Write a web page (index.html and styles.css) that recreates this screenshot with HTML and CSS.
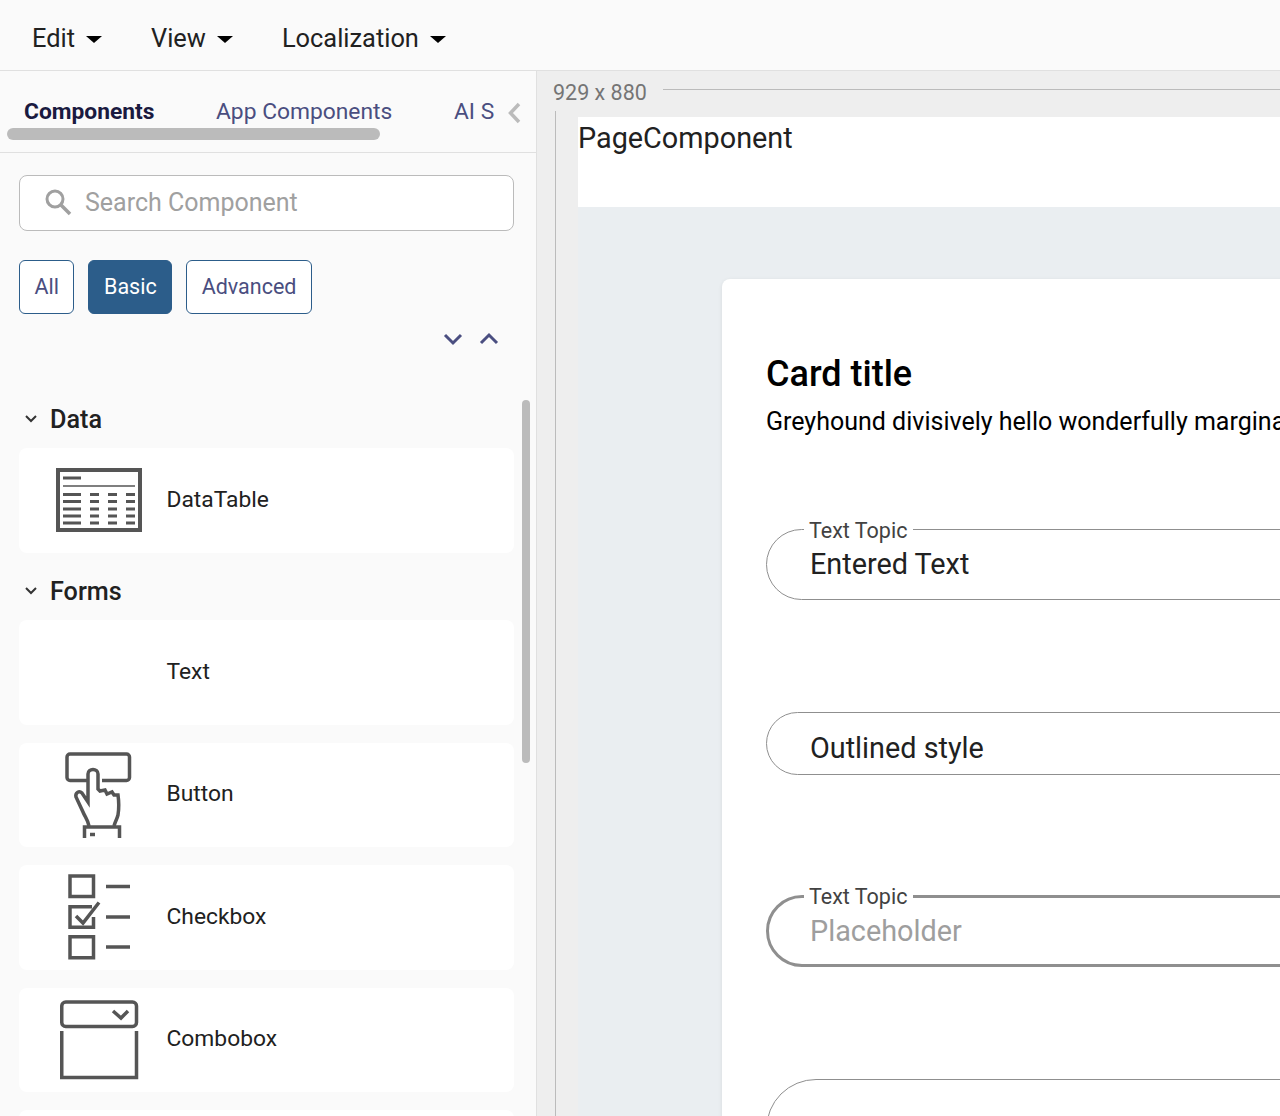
FILE: index.html
```html
<!DOCTYPE html>
<html lang="en"><head>
    <meta charset="UTF-8">
    <title>Page Editor</title>
    <link rel="stylesheet" href="styles.css">
</head>
<body>

    <header class="menubar">
        <div class="menu">Edit <span class="caret"></span></div>
        <div class="menu">View <span class="caret"></span></div>
        <div class="menu">Localization <span class="caret"></span></div>
    </header>

    <div class="main">
        <aside class="sidebar">
            <div class="tabs">
                <span class="tab tab-active">Components</span>
                <span class="tab tab-app">App Components</span>
                <span class="tab tab-ai">AI S</span>
                <svg class="tab-back" width="16" height="22" viewBox="0 0 16 22"><path d="M12 2 3.500 11 12 20" fill="none" stroke="#bbb" stroke-width="3.500"/></svg>
                <div class="tabs-scroll"></div>
            </div>

            <div class="search">
                <svg width="28" height="28" viewBox="0 0 28 28"><circle cx="11" cy="11" r="8" fill="none" stroke="#a0a0a0" stroke-width="3"/><path d="M17 17 26 26" stroke="#a0a0a0" stroke-width="3.500"/></svg>
                <span>Search Component</span>
            </div>

            <div class="filters">
                <button class="filter">All</button>
                <button class="filter filter-on">Basic</button>
                <button class="filter">Advanced</button>
            </div>

            <div class="collapse-row">
                <svg width="20" height="14" viewBox="0 0 20 14"><path d="M2 3 10 11 18 3" fill="none" stroke="#4a4e80" stroke-width="3"/></svg>
                <svg width="20" height="14" viewBox="0 0 20 14"><path d="M2 11 10 3 18 11" fill="none" stroke="#4a4e80" stroke-width="3"/></svg>
            </div>

            <div class="section-head">
                <svg width="14" height="10" viewBox="0 0 14 10"><path d="M2 2 7 7 12 2" fill="none" stroke="#333" stroke-width="2"/></svg>
                Data
            </div>
            <div class="item">
                <svg class="item-icon" width="120" height="104" viewBox="0 0 120 104">
                    <rect x="18" y="22" width="82" height="60" fill="none" stroke="#555" stroke-width="4"/>
                    <path d="M23 30H41" stroke="#555" stroke-width="3"/>
                    <path d="M23 38H95" stroke="#555" stroke-width="1.500"/>
                    <path d="M23 46.500H41M50 46.500H59M68 46.500H77M86 46.500H95M23 53.500H41M50 53.500H59M68 53.500H77M86 53.500H95M23 61H41M50 61H59M68 61H77M86 61H95M23 68H41M50 68H59M68 68H77M86 68H95M23 75H41M50 75H59M68 75H77M86 75H95" stroke="#555" stroke-width="3"/>
                </svg>
                <span>DataTable</span>
            </div>

            <div class="section-head section-forms">
                <svg width="14" height="10" viewBox="0 0 14 10"><path d="M2 2 7 7 12 2" fill="none" stroke="#333" stroke-width="2"/></svg>
                Forms
            </div>
            <div class="item">
                <div class="item-icon"></div>
                <span>Text</span>
            </div>
            <div class="item">
                <svg class="item-icon" width="120" height="104" viewBox="0 2 120 104" fill="none" stroke="#555" stroke-width="3.500">
                    <path d="M47 39.500H30a3 3 0 0 1-3-3V16a3 3 0 0 1 3-3H86.500a3 3 0 0 1 3 3V36.500a3 3 0 0 1-3 3H62"/>
                    <path d="M49 85C48 79 45 76 43 71L36 56C35 52 39 49 42 52L48 61V33C48 27 58 27 58 33V48L60 50 65 49 67 53 72 51 74 54 78 54C79 61 79 68 78 74 77 78 75 81 74 85"/>
                    <path d="M44.500 97V86H79.500V97"/>
                    <path d="M50 93.500H55"/>
                </svg>
                <span>Button</span>
            </div>
            <div class="item">
                <svg class="item-icon" width="120" height="104" viewBox="0 0 120 104" fill="none" stroke="#555" stroke-width="3.500">
                    <rect x="30" y="11" width="23.500" height="20.500"/>
                    <path d="M52 41.750H30V62.250H53.500V52"/>
                    <rect x="30" y="71.750" width="23.500" height="21"/>
                    <path d="M66 21.500H90M66 52H90M66 82H90"/>
                    <path d="M36 51 43 58 59 37.500"/>
                </svg>
                <span>Checkbox</span>
            </div>
            <div class="item">
                <svg class="item-icon" width="120" height="104" viewBox="0 -3 120 104" fill="none" stroke="#555" stroke-width="3.500">
                    <rect x="21.750" y="11" width="74.750" height="24.500" rx="4"/>
                    <path d="M73 20 81 27 88 20"/>
                    <path d="M21.750 40V86.500H96.500V40"/>
                </svg>
                <span>Combobox</span>
            </div>
            <div class="item"></div>

            <div class="side-scroll"></div>
        </aside>

        <main class="canvas">
            <div class="size-row">
                <span>929 x 880</span>
                <div class="size-line"></div>
            </div>
            <div class="ruler-wrap">
                <div class="page">
                    <div class="page-head">PageComponent</div>
                    <div class="stage">
                        <div class="card">
                            <h2>Card title</h2>
                            <p>Greyhound divisively hello wonderfully marginally</p>

                            <fieldset class="field field-first">
                                <legend>Text Topic</legend>
                                <div class="value">Entered Text</div>
                            </fieldset>

                            <fieldset class="field field-plain">
                                <div class="value">Outlined style</div>
                            </fieldset>

                            <fieldset class="field field-focus">
                                <legend>Text Topic</legend>
                                <div class="value value-empty">Placeholder</div>
                            </fieldset>

                            <fieldset class="field field-last"></fieldset>
                        </div>
                    </div>
                </div>
            </div>
        </main>
    </div>

</body></html>
```

FILE: styles.css
```css
* {
    box-sizing: border-box;
}

html, body {
    height: 1116px;
    margin: 0;
    overflow: hidden;
}

body {
    background-color: #fafafa;
    color: #212121;
    font-family: Roboto, "Liberation Sans", sans-serif;
}

/* top menu */
.menubar {
    display: flex;
    align-items: center;
    gap: 49px;
    height: 71px;
    padding: 5px 0 0 32px;
    border-bottom: 1px solid #e0e0e0;
    font-size: 25.400px;
}

.menu {
    display: flex;
    align-items: center;
    gap: 11px;
}

.caret {
    width: 0;
    height: 0;
    margin-top: 3px;
    border-left: 8px solid transparent;
    border-right: 8px solid transparent;
    border-top: 7px solid #000;
}

.main {
    display: flex;
    height: 1045px;
}

/* left panel */
.sidebar {
    position: relative;
    flex: 0 0 537px;
    overflow: hidden;
    border-right: 1px solid #e0e0e0;
}

.tabs {
    position: relative;
    height: 82px;
    border-bottom: 1px solid #e0e0e0;
    font-size: 22.800px;
    line-height: 28px;
}

.tab {
    position: absolute;
    top: 27px;
    color: #4a4e80;
}

.tab-active {
    left: 24px;
    color: #1a1a40;
    font-weight: 700;
}

.tab-app {
    left: 216px;
}

.tab-ai {
    left: 454px;
}

.tab-back {
    position: absolute;
    left: 507px;
    top: 31px;
}

.tabs-scroll {
    position: absolute;
    left: 7px;
    top: 57px;
    width: 373px;
    height: 12px;
    border-radius: 6px;
    background-color: #bbb;
}

.search {
    display: flex;
    align-items: center;
    gap: 13px;
    width: 495px;
    height: 56px;
    margin: 22px 0 0 19px;
    padding: 0 0 2px 24px;
    border: 1px solid #bbb;
    border-radius: 8px;
    background-color: #fff;
    color: #a0a0a0;
    font-size: 25px;
}

.filters {
    display: flex;
    gap: 14px;
    margin: 29px 0 0 19px;
}

.filter {
    height: 54px;
    padding: 0 14.500px 2px;
    border: 1px solid #2c5d8a;
    border-radius: 6px;
    background-color: #fff;
    color: #4a4e80;
    font-family: inherit;
    font-size: 21.500px;
}

.filter-on {
    background-color: #2c5d8a;
    color: #fff;
}

.collapse-row {
    display: flex;
    justify-content: flex-end;
    gap: 16px;
    height: 14px;
    margin-top: 18px;
    padding-right: 37px;
}

.section-head {
    display: flex;
    align-items: center;
    gap: 12px;
    height: 34px;
    margin: 56px 0 12px 24px;
    font-size: 25.200px;
    font-weight: 500;
}

.section-forms {
    margin-top: 21.500px;
}

.item {
    display: flex;
    align-items: center;
    width: 495px;
    height: 104.500px;
    margin: 0 0 18px 19px;
    border-radius: 8px;
    background-color: #fff;
    font-size: 22.800px;
}

.item span {
    margin-bottom: 2px;
}

.item-icon {
    flex: 0 0 120px;
    height: 104px;
    margin: 0 6.500px 0 21px;
}

.side-scroll {
    position: absolute;
    left: 522px;
    top: 329px;
    width: 8px;
    height: 363px;
    border-radius: 4px;
    background-color: #bbb;
}

/* right side */
.canvas {
    flex: 1;
    min-width: 0;
    overflow: hidden;
    background-color: #eee;
}

.size-row {
    display: flex;
    align-items: center;
    gap: 16px;
    height: 40px;
    padding: 2px 0 0 16px;
    color: #757575;
    font-size: 21.500px;
}

.size-line {
    flex: 1;
    height: 1px;
    margin-top: -6px;
    background-color: #bbb;
}

.ruler-wrap {
    height: 1005px;
    margin-left: 18px;
    padding: 6px 0 0 22px;
    border-left: 1px solid #bbb;
}

.page-head {
    height: 90px;
    padding-top: 3px;
    background-color: #fff;
    font-size: 28.800px;
    line-height: 36px;
}

.stage {
    height: 909px;
    padding: 72px 0 0 144px;
    background-color: #eaeef1;
}

.card {
    width: 1000px;
    height: 900px;
    padding: 70px 0 0 44px;
    border-radius: 8px;
    background-color: #fff;
    box-shadow: 0 1px 4px rgba(0, 0, 0, 0.08);
}

.card h2 {
    margin: 0;
    color: #000;
    font-size: 36px;
    font-weight: 500;
    line-height: 50px;
}

.card p {
    margin: 7px 0 0;
    color: #000;
    font-size: 25px;
    line-height: 32px;
    white-space: nowrap;
}

/* outlined text fields */
.field {
    width: 900px;
    margin: 0;
    padding: 0 0 0 43px;
    border: 1px solid #8f8f8f;
    border-radius: 36px;
}

.field legend {
    margin-left: -6px;
    padding: 0 6px 0 5px;
    color: #424242;
    font-size: 21.500px;
    line-height: 28px;
}

.value {
    font-size: 28.800px;
    line-height: 36px;
}

.value-empty {
    color: #9e9e9e;
}

.field-first {
    height: 86.500px;
    margin-top: 75px;
}

.field-first legend {
    padding-top: 4px;
}

.field-first .value {
    padding-top: 1px;
}

.field-plain {
    height: 63px;
    margin-top: 112px;
    padding-top: 17px;
}

.field-focus {
    height: 84px;
    margin-top: 108px;
    border-width: 3px;
    padding-left: 41px;
}

.field-focus .value {
    padding-top: 2px;
}

.field-last {
    height: 100px;
    margin-top: 112px;
    border-radius: 50px;
}
```
